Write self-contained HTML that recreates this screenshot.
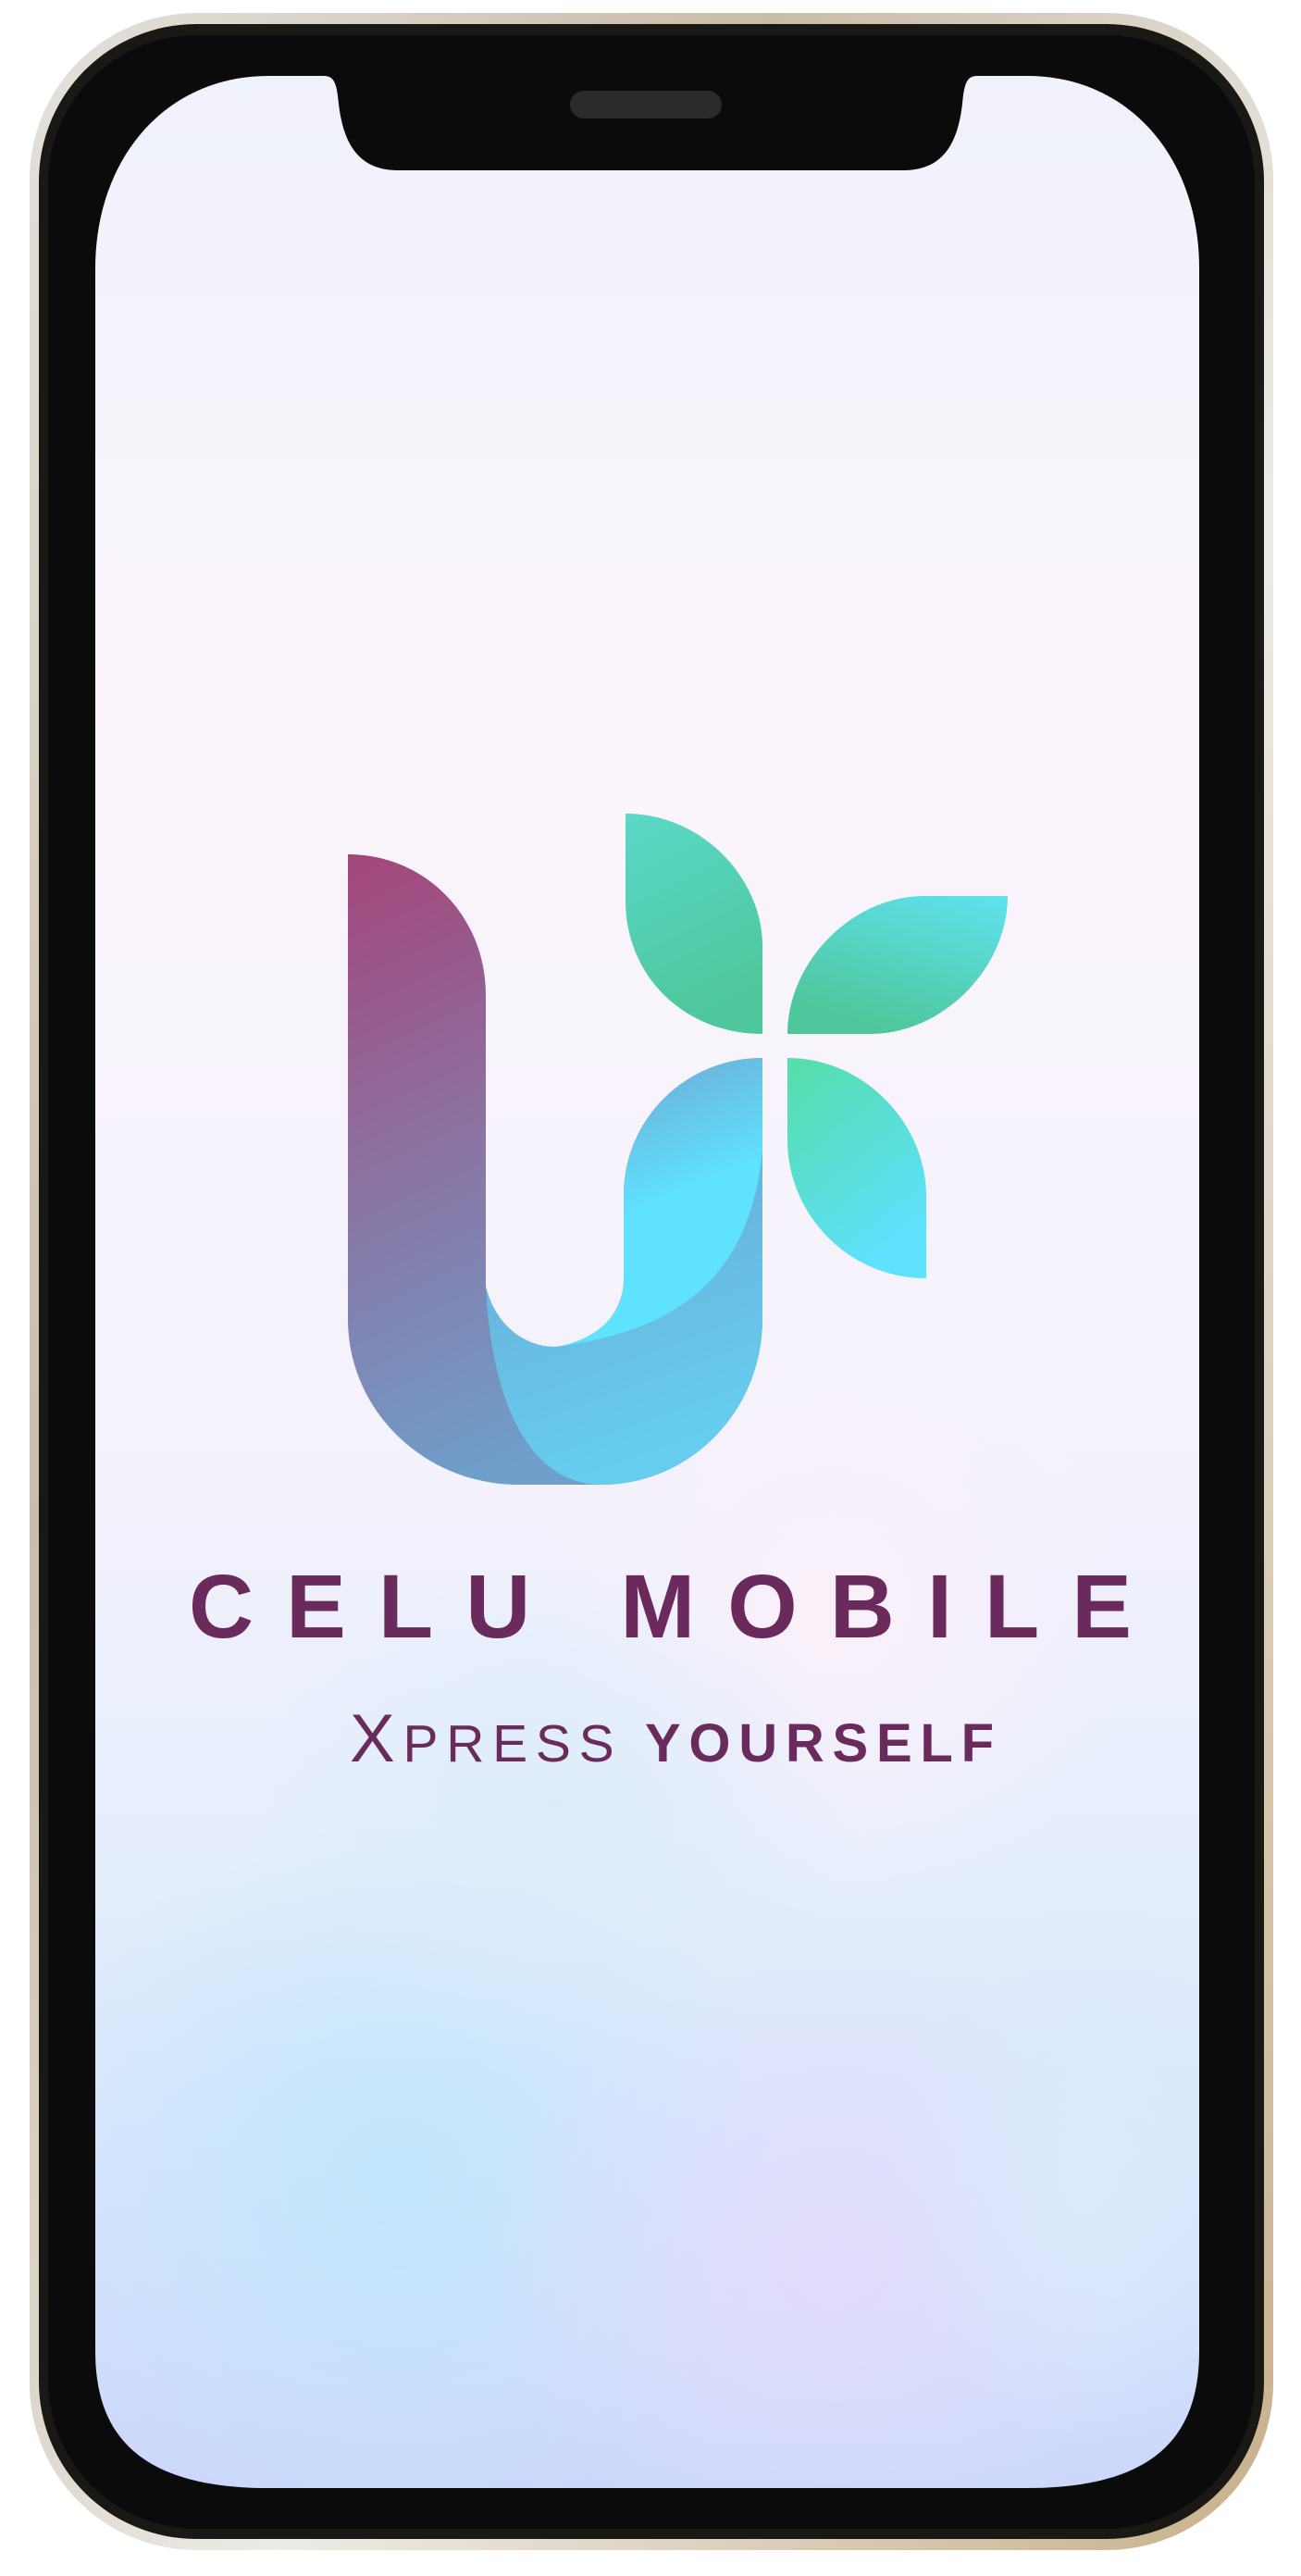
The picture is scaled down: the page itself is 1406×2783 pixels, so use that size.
<!DOCTYPE html>
<html><head><meta charset="utf-8"><style>
html,body{margin:0;padding:0;background:#fff;}
body{width:1406px;height:2783px;overflow:hidden;position:relative;}
</style></head><body>
<svg width="1406" height="2783" viewBox="0 0 1406 2783" xmlns="http://www.w3.org/2000/svg" style="position:absolute;left:0;top:0">
<defs>
<linearGradient id="metal" x1="0" y1="0" x2="1" y2="1">
<stop offset="0" stop-color="#e4e2dd"/><stop offset="0.3" stop-color="#c9bca8"/><stop offset="0.6" stop-color="#ecebe6"/><stop offset="1" stop-color="#c8b08a"/>
</linearGradient>
<linearGradient id="scr" x1="0" y1="0" x2="0" y2="1">
<stop offset="0" stop-color="#eff1fb"/><stop offset="0.25" stop-color="#fbf5fb"/><stop offset="0.55" stop-color="#f5f2fc"/><stop offset="0.75" stop-color="#e4eefc"/><stop offset="1" stop-color="#cbd8fb"/>
</linearGradient>
<radialGradient id="blob1" cx="0.5" cy="0.5" r="0.5"><stop offset="0" stop-color="#bfe6fb" stop-opacity="0.95"/><stop offset="1" stop-color="#bfe6fb" stop-opacity="0"/></radialGradient>
<radialGradient id="blob2" cx="0.5" cy="0.5" r="0.5"><stop offset="0" stop-color="#e2dcfb" stop-opacity="0.95"/><stop offset="1" stop-color="#e2dcfb" stop-opacity="0"/></radialGradient>
<radialGradient id="blob3" cx="0.5" cy="0.5" r="0.5"><stop offset="0" stop-color="#fcf0fa" stop-opacity="0.9"/><stop offset="1" stop-color="#fcf0fa" stop-opacity="0"/></radialGradient>
<radialGradient id="blob4" cx="0.5" cy="0.5" r="0.5"><stop offset="0" stop-color="#dcecfb" stop-opacity="0.9"/><stop offset="1" stop-color="#dcecfb" stop-opacity="0"/></radialGradient>
<clipPath id="sc"><path d="M290,82 L350,82 C362,82 364,92 366,112 C372,165 395,184 430,184 L975,184 C1012,184 1034,165 1040,112 C1042,92 1044,82 1056,82 L1110,82 C1220,82 1296,170 1296,290 L1296,2540 C1296,2630 1250,2688 1110,2688 L290,2688 C150,2688 103,2630 103,2540 L103,290 C103,170 180,82 290,82 Z"/></clipPath>
<linearGradient id="uL" x1="0" y1="0" x2="0.3" y2="1"><stop offset="0" stop-color="#a4457a"/><stop offset="0.5" stop-color="#8a74a3"/><stop offset="1" stop-color="#6f9fcb"/></linearGradient>
<linearGradient id="uR" x1="0" y1="0" x2="0.3" y2="1"><stop offset="0" stop-color="#6aa8d4"/><stop offset="1" stop-color="#66cdee"/></linearGradient>
<linearGradient id="uI" x1="0" y1="0" x2="0.3" y2="1"><stop offset="0" stop-color="#71a0cc"/><stop offset="0.6" stop-color="#5fe2fe"/><stop offset="1" stop-color="#5fe2fe"/></linearGradient>
<linearGradient id="lf1" x1="0" y1="0" x2="0.3" y2="1"><stop offset="0" stop-color="#5ad8c8"/><stop offset="1" stop-color="#4ec79c"/></linearGradient>
<linearGradient id="lf2" x1="1" y1="0" x2="0.5" y2="1"><stop offset="0" stop-color="#60e2ef"/><stop offset="1" stop-color="#4ec79c"/></linearGradient>
<linearGradient id="lf3" x1="0" y1="0" x2="0.5" y2="1"><stop offset="0" stop-color="#55dda8"/><stop offset="1" stop-color="#5ee1fd"/></linearGradient>
</defs>
<!-- frame -->
<rect x="32" y="14" width="1344" height="2741" rx="180" fill="url(#metal)"/>
<rect x="42" y="26" width="1324" height="2717" rx="170" fill="#1a1814"/>
<rect x="52" y="38" width="1304" height="2694" rx="160" fill="#0b0b0b"/>
<!-- screen -->
<g clip-path="url(#sc)">
<rect x="100" y="80" width="1200" height="2610" fill="url(#scr)"/>
<ellipse cx="430" cy="2350" rx="420" ry="380" fill="url(#blob1)"/>
<ellipse cx="900" cy="2450" rx="380" ry="330" fill="url(#blob2)"/>
<ellipse cx="1180" cy="2350" rx="220" ry="300" fill="url(#blob4)"/>
<ellipse cx="900" cy="1750" rx="330" ry="320" fill="url(#blob3)"/>
<ellipse cx="600" cy="1950" rx="330" ry="260" fill="url(#blob4)"/>
</g>
<!-- speaker -->
<rect x="616" y="98" width="164" height="30" rx="15" fill="#2a2a2a"/>
<!-- logo -->
<path d="M376,923 C460,923 525,990 525,1075 L525,1390 C535,1430 565,1455 600,1455 C640,1455 674,1420 674,1383 L674,1292 C674,1210 740,1143 824,1143 L824,1425 C824,1525 745,1604 650,1604 L560,1604 C460,1604 376,1525 376,1425 Z" fill="url(#uL)"/>
<path d="M525,1390 C532,1530 580,1604 650,1604 C745,1604 824,1525 824,1425 L824,1243 C810,1390 720,1440 600,1455 C565,1455 535,1430 525,1390 Z" fill="url(#uR)"/>
<path d="M674,1292 C674,1210 740,1143 824,1143 L824,1243 C810,1390 720,1440 600,1455 C645,1448 674,1420 674,1383 Z" fill="url(#uI)"/>
<path d="M676,879 C760,879 824,950 824,1022 L824,1117 C740,1117 676,1055 676,973 Z" fill="url(#lf1)"/>
<path d="M1089,968 L999,968 C920,968 851,1040 851,1117 L940,1117 C1020,1117 1089,1045 1089,968 Z" fill="url(#lf2)"/>
<path d="M851,1143 C935,1143 1001,1215 1001,1292 L1001,1381 C915,1381 851,1310 851,1232 Z" fill="url(#lf3)"/>
<!-- text -->
<text x="204" y="1769" textLength="1019" lengthAdjust="spacing" font-family="Liberation Sans, sans-serif" font-weight="bold" font-size="97" fill="#6a2a5b">CELU MOBILE</text>
<text x="378" y="1903" textLength="696" lengthAdjust="spacing" font-family="Liberation Sans, sans-serif" fill="#6a2a5b"><tspan font-size="73" font-weight="normal">X</tspan><tspan font-size="57" font-weight="normal">PRESS </tspan><tspan font-size="58" font-weight="bold">YOURSELF</tspan></text>
</svg>
</body></html>
